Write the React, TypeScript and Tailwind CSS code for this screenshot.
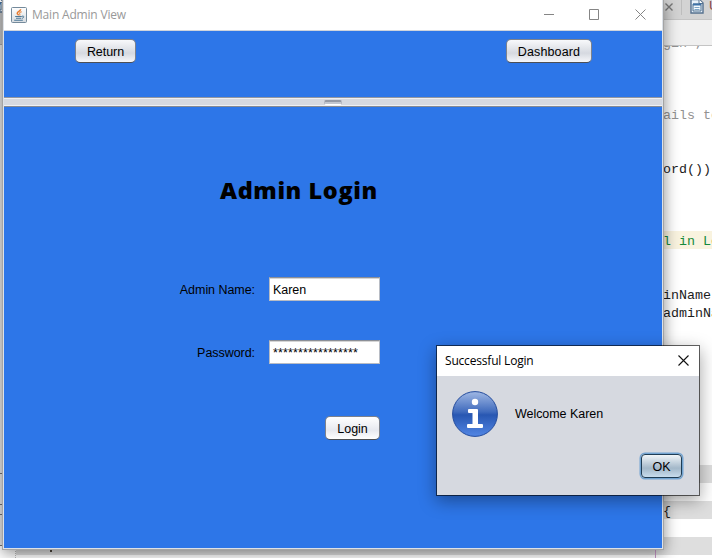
import type { ReactNode } from "react";

const swing = "font-['Liberation_Sans',Arial,sans-serif] text-[12.5px] leading-[15px] tracking-[-0.05px] text-black";
const caption = "font-['Open_Sans','Noto_Sans',sans-serif] text-[12px] leading-[16px] tracking-[-0.19px] whitespace-pre";

function NimbusButton({ children, className = "" }: { children: ReactNode; className?: string }) {
  return (
    <button
      className={`flex h-[24px] shrink-0 items-center justify-center rounded-[5px] border border-[#7d828c] border-b-[#4c4f55] bg-linear-to-b pt-[2px] ${swing} ${className}`}
    >
      {children}
    </button>
  );
}

function JavaIcon() {
  return (
    <svg className="mr-[5px] shrink-0" width="16" height="16" viewBox="0 0 16 16" fill="none">
      <defs>
        <linearGradient id="cupBg" x1="0" y1="0" x2="0" y2="1">
          <stop offset="0" stopColor="#fff" />
          <stop offset="1" stopColor="#d5dbe0" />
        </linearGradient>
      </defs>
      <rect x=".5" y=".5" width="15" height="15" rx="1" fill="url(#cupBg)" stroke="#748a9b" />
      <path d="M9.7 2.3C9.8 4 6 4.6 6.2 6.3c.1.9 1.2 1.2 1.3 2" stroke="#e8792c" strokeWidth="1.4" />
      <path d="M10.7 4.6C9 5.3 8 5.9 8.7 7c.4.6.4 1-.2 1.5" stroke="#ea9b62" strokeWidth="1.2" />
      <path d="M4.2 9.5h6.6M5 11.2h5.3M3.2 13.2h8.6" stroke="#4e7896" strokeWidth="1.1" />
      <path d="M11 9.2c2.6-.7 2.3 1.8 0 2.1" stroke="#4e7896" />
    </svg>
  );
}

function FileIcon() {
  return (
    <svg width="14" height="15" viewBox="0 0 14 15" fill="none" className="shrink-0">
      <path d="M1 .5h8.500l3.500 3.500v10H1z" fill="#e9f2fa" stroke="#55718f" strokeWidth="1.4" />
      <path d="M9 .5v4h4" fill="#fff" stroke="#55718f" />
      <path d="M3 5h8v7H3z" fill="#f4fafe" stroke="#4d6f8e" />
      <path d="M3 5.500h8" stroke="#3f73a8" strokeWidth="2" />
      <path d="M4.500 8.500h5M4.500 10.500h5" stroke="#7fa5c6" />
    </svg>
  );
}

const codeRows: { text?: string; tone?: string; bg?: string }[] = [
  { text: "gin\",", tone: "text-[#929292]" },
  {}, {}, {},
  { text: "ails to", tone: "text-[#929292]" },
  {}, {},
  { text: "ord())" },
  {}, {}, {},
  { text: "l in Lo", tone: "text-[#168a3c]", bg: "bg-[#f9f3df]" },
  {}, {},
  { text: "inName" },
  { text: "adminNa" },
  {}, {}, {}, {}, {}, {}, {}, {},
  { bg: "bg-[#dedede]" },
  {},
  { text: "{", bg: "bg-[#dedede]" },
  {},
  { bg: "bg-[#dedede]" },
  {},
];

function Editor() {
  return (
    <div className="flex h-full w-full">
      <div className="flex w-[15px] shrink-0 flex-col bg-[#ececec]">
        <div className="flex h-[13px] items-end bg-[#d3d3d3]"><div className="-ml-[10px]"><FileIcon /></div></div>
        <div className="h-[32px] border-b border-[#aaa] bg-[#c9c9c9]" />
        <div className="h-[429px] border-b border-[#777]" />
        <div className="h-[31px] border-b border-[#777]" />
        <div className="h-[10px] border-b border-[#777]" />
        <div className="h-[31px] border-b border-[#777]" />
        <div className="flex-1 bg-white" />
      </div>
      <div className="flex min-w-0 flex-1 flex-col border-l border-dotted border-[#bbb] bg-white">
        <div className="flex h-[19px] shrink-0 items-center justify-end bg-[#d3d3d3]">
          <svg width="8" height="8" viewBox="0 0 8 8" className="mr-[8px] mb-[5px] shrink-0" stroke="#777" strokeWidth="1.4">
            <path d="M.5.5l7 7M7.5.5l-7 7" />
          </svg>
          <div className="mr-[8px] mb-[4px] h-[15px] w-px bg-[#bdbdbd]" />
          <div className="mb-[7px]"><FileIcon /></div>
          <div className="mb-[9px] ml-[5px] w-[3px] overflow-hidden font-['Liberation_Sans',sans-serif] text-[13px] leading-[15px] text-[#8c4a4a]">U</div>
        </div>
        <div className="h-[27px] shrink-0 border-t border-b border-t-[#c4c4c4] border-b-[#c4c4c4] bg-[#f0f0f0]" />
        <div className="min-h-0 flex-1 overflow-hidden">
          <div className="-mt-[13px]">
            {codeRows.map((row, i) => (
              <div
                key={i}
                className={`h-[18px] overflow-hidden pl-[647px] font-['Liberation_Mono',monospace] text-[13.33px] leading-[21px] whitespace-pre ${row.bg ?? ""} ${row.tone ?? "text-[#1c1c1c]"}`}
              >
                {row.text}
              </div>
            ))}
          </div>
        </div>
      </div>
      <div className="absolute top-[549px] left-[50px] h-[3px] w-[2px] bg-[#4b443b]" />
      <div className="absolute top-[549px] left-[655px] h-[9px] w-px bg-[#c797c7]" />
    </div>
  );
}

function MainWindow() {
  return (
    <div className="absolute top-0 left-[2px] flex h-[550px] w-[662px] flex-col border-r border-b border-l border-[#a4a4a4] bg-[#dce1e8] pr-px pb-px pl-px shadow-[0_3px_14px_rgba(0,0,0,0.45)]">
      <div className="flex h-[31px] shrink-0 items-center border-b border-[#cfd4dc] bg-white pl-[7px]">
        <JavaIcon />
        <span className={`${caption} flex-1 text-[#999]`}>Main Admin View</span>
        <svg width="104" height="11" viewBox="0 0 104 11" fill="none" stroke="#858585" className="mr-[14px] mb-[2px]">
          <path d="M0 5.5h10M45.500.5h9v10h-9zM91.500.5l10 10M101.500.5l-10 10" />
        </svg>
      </div>
      <div className="flex h-[66px] shrink-0 justify-between bg-[#2d76e8] pt-[8px] pr-[70px] pl-[71px]">
        <NimbusButton className="w-[61px] from-[#f8f9fb] via-[#d6d9e0] via-60% to-[#f6f7fa]">Return</NimbusButton>
        <NimbusButton className="w-[86px] from-[#f8f9fb] via-[#d6d9e0] via-60% to-[#f6f7fa]"><span className="tracking-[0.13px]">Dashboard</span></NimbusButton>
      </div>
      <div className="flex h-[10px] shrink-0 items-start justify-center border-t border-b border-t-[#9297a1] border-b-[#858a93] bg-[#d6d9e0] pt-[2px] shadow-[inset_0_1px_#eff0f3,inset_0_-1px_#eff0f3]">
        <div className="mr-px h-[5px] w-[18px] rounded-[2px] border border-t-2 border-[#b5b9c2] border-t-[#959aa6] border-b-white bg-[#c3c7cf]" />
      </div>
      <div className="flex flex-1 flex-col bg-[#2d76e8] pl-[161px]">
        <h1 className="mt-[66px] ml-[55px] h-[35px] font-['Open_Sans','Noto_Sans',sans-serif] text-[23.5px] leading-[34px] font-extrabold tracking-[0.57px] whitespace-nowrap text-black">
          Admin Login
        </h1>
        <div className="mt-[69px] flex h-[24px] w-[215px] items-center justify-end">
          <label className={`${swing} mr-[14px] pt-[2px] whitespace-nowrap`}>Admin Name:</label>
          <div className={`${swing} flex h-[24px] w-[111px] items-center border border-[#b8bcc4] border-t-[#8b8f97] bg-white pt-[2px] pl-[3px] shadow-[inset_0_1px_#d5d5d5]`}>Karen</div>
        </div>
        <div className="mt-[39px] flex h-[24px] w-[215px] items-center justify-end">
          <label className={`${swing} mr-[14px] pt-[2px] whitespace-nowrap`}>Password:</label>
          <div className="flex h-[24px] w-[111px] items-center border border-[#b8bcc4] border-t-[#8b8f97] bg-white pt-[2px] pl-[3px] font-['Liberation_Sans',Arial,sans-serif] text-[12.5px] leading-[15px] tracking-[0.14px] text-black shadow-[inset_0_1px_#d5d5d5]">*****************</div>
        </div>
        <div className="mt-[52px] flex w-[215px] justify-end">
          <NimbusButton className="w-[55px] from-[#ffffff] via-[#e7e9ef] via-60% to-[#ffffff]">Login</NimbusButton>
        </div>
      </div>
    </div>
  );
}

function InfoIcon() {
  return (
    <svg width="46" height="46" viewBox="0 0 46 46" className="shrink-0">
      <defs>
        <linearGradient id="ball" x1="0" y1="0" x2="0" y2="1">
          <stop offset="0" stopColor="#a0b8e4" />
          <stop offset=".45" stopColor="#406bbd" />
          <stop offset=".52" stopColor="#2857b2" />
          <stop offset="1" stopColor="#5286e4" />
        </linearGradient>
      </defs>
      <circle cx="23" cy="23" r="22.4" fill="url(#ball)" stroke="#244c9d" strokeWidth="1" />
      <circle cx="23" cy="11" r="3.2" fill="#fff" />
      <path d="M17 18h8q1 0 1 1v14h4q1 0 1 1v2q0 1-1 1H16q-1 0-1-1v-2q0-1 1-1h4.500v-11H17q-1 0-1-1v-2q0-1 1-1z" fill="#fff" />
    </svg>
  );
}

function LoginDialog() {
  return (
    <div className="absolute top-[345px] left-[436px] flex h-[151px] w-[264px] flex-col border border-black/60 bg-[#d6d9e0] bg-clip-padding shadow-[0_5px_16px_rgba(0,0,0,0.36)]">
      <div className="flex h-[30px] shrink-0 items-center justify-between bg-white pr-[10px] pl-[8px]">
        <span className={`${caption} text-black`}>Successful Login</span>
        <svg width="11" height="11" viewBox="0 0 11 11" stroke="#111" strokeWidth="1.1" className="mb-[2px]">
          <path d="M.5.5l10 10M10.5.5l-10 10" />
        </svg>
      </div>
      <div className="flex items-center pt-[15px] pl-[15px]">
        <InfoIcon />
        <span className={`${swing} mt-px ml-[17px]`}>Welcome Karen</span>
      </div>
      <div className="mt-[17px] flex justify-end pr-[17px]">
        <button className={`flex h-[24px] w-[41px] items-center justify-center rounded-[4px] border border-[#1f3d55] bg-linear-to-b from-[#f1f5f8] via-[#a3b8c9] via-60% to-[#c7dced] pt-[2px] shadow-[0_0_0_1.5px_#73a4d1] ${swing}`}>OK</button>
      </div>
    </div>
  );
}

export default function App() {
  return (
    <div className="relative h-[558px] w-[712px] overflow-hidden bg-white">
      <Editor />
      <MainWindow />
      <LoginDialog />
    </div>
  );
}
